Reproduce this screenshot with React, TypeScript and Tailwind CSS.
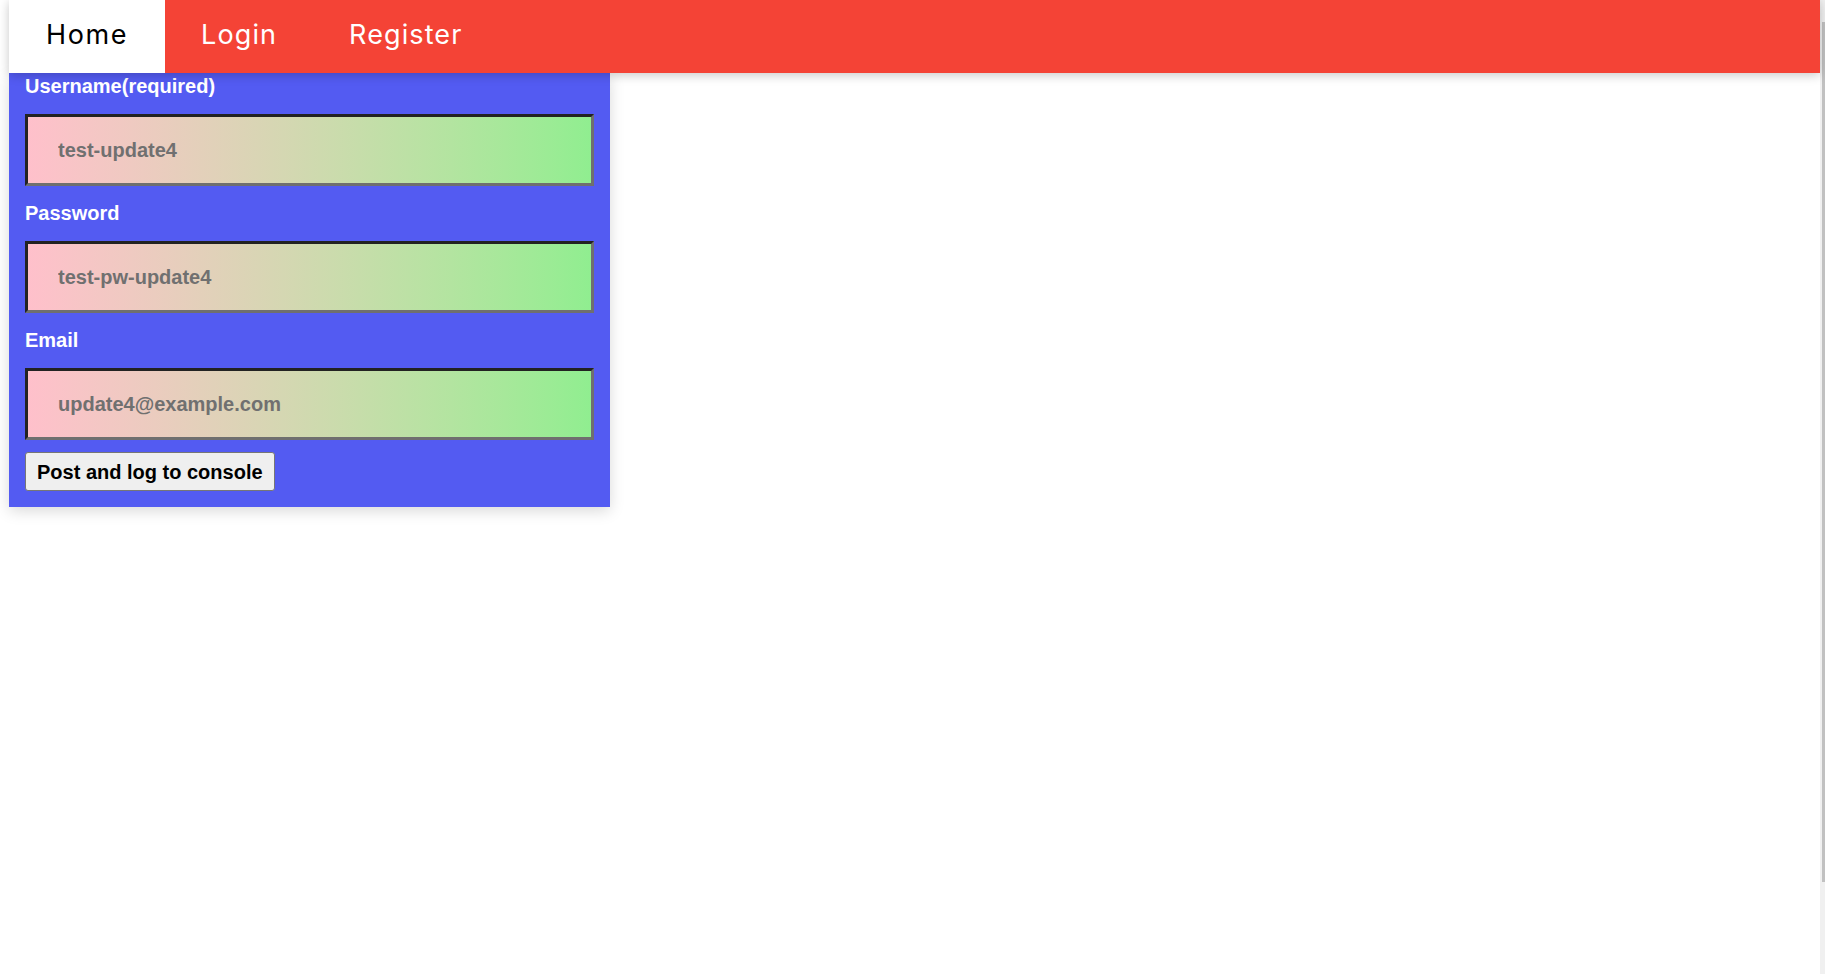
import { useState } from "react";

const tabs = ["Home", "Login", "Register"];

const fields = [
  { label: "Username(required)", value: "test-update4" },
  { label: "Password", value: "test-pw-update4" },
  { label: "Email", value: "update4@example.com" },
];

export default function App() {
  const [active] = useState("Home");

  return (
    <div className="flex h-screen bg-white">
      <main className="flex-1 pl-[9px]">
        <nav className="relative z-10 flex h-[73px] bg-[#f44336] shadow-[0_2px_10px_rgba(0,0,0,0.22)] font-['Inter',sans-serif]">
          {tabs.map((tab) => (
            <a
              key={tab}
              href="#"
              className={
                tab === active
                  ? "flex items-center bg-white px-[37px] pb-[2px] text-[27px] font-normal tracking-[1.6px] text-black"
                  : "flex items-center px-[36px] pb-[2px] text-[27px] font-normal tracking-[1.1px] text-white"
              }
            >
              {tab}
            </a>
          ))}
        </nav>

        <form
          className="w-[601px] bg-[#535bf2] px-[16px] pt-[2px] pb-[16px] shadow-[0_4px_14px_rgba(0,0,0,0.15)] font-['Liberation_Sans',Arial,sans-serif]"
          onSubmit={(e) => e.preventDefault()}
        >
          {fields.map(({ label, value }, i) => (
            <div key={label} className={i > 0 ? "mt-4" : ""}>
              <label className="mb-4 block text-[20px] leading-[23px] font-bold text-white">
                {label}
              </label>
              <input
                defaultValue={value}
                className="block h-[72px] w-full border-[3px] border-t-[#222222] border-l-[#222222] border-r-[#6f6f6f] border-b-[#6f6f6f] bg-linear-to-r from-[#ffc0cb] to-[#90ee90] pl-[30px] text-[20px] font-bold text-[#707070] outline-none"
              />
            </div>
          ))}
          <button
            type="submit"
            className="mt-3 h-[39px] rounded-[3px] border border-[#767676] bg-[#efefef] px-[11px] text-[20px] font-bold text-black"
          >
            Post and log to console
          </button>
        </form>
      </main>

      <div className="w-[5px] bg-[#f0f0f0] pt-[22px]">
        <div className="ml-[2px] h-[860px] w-[3px] bg-[#c1c1c1]" />
      </div>
    </div>
  );
}
